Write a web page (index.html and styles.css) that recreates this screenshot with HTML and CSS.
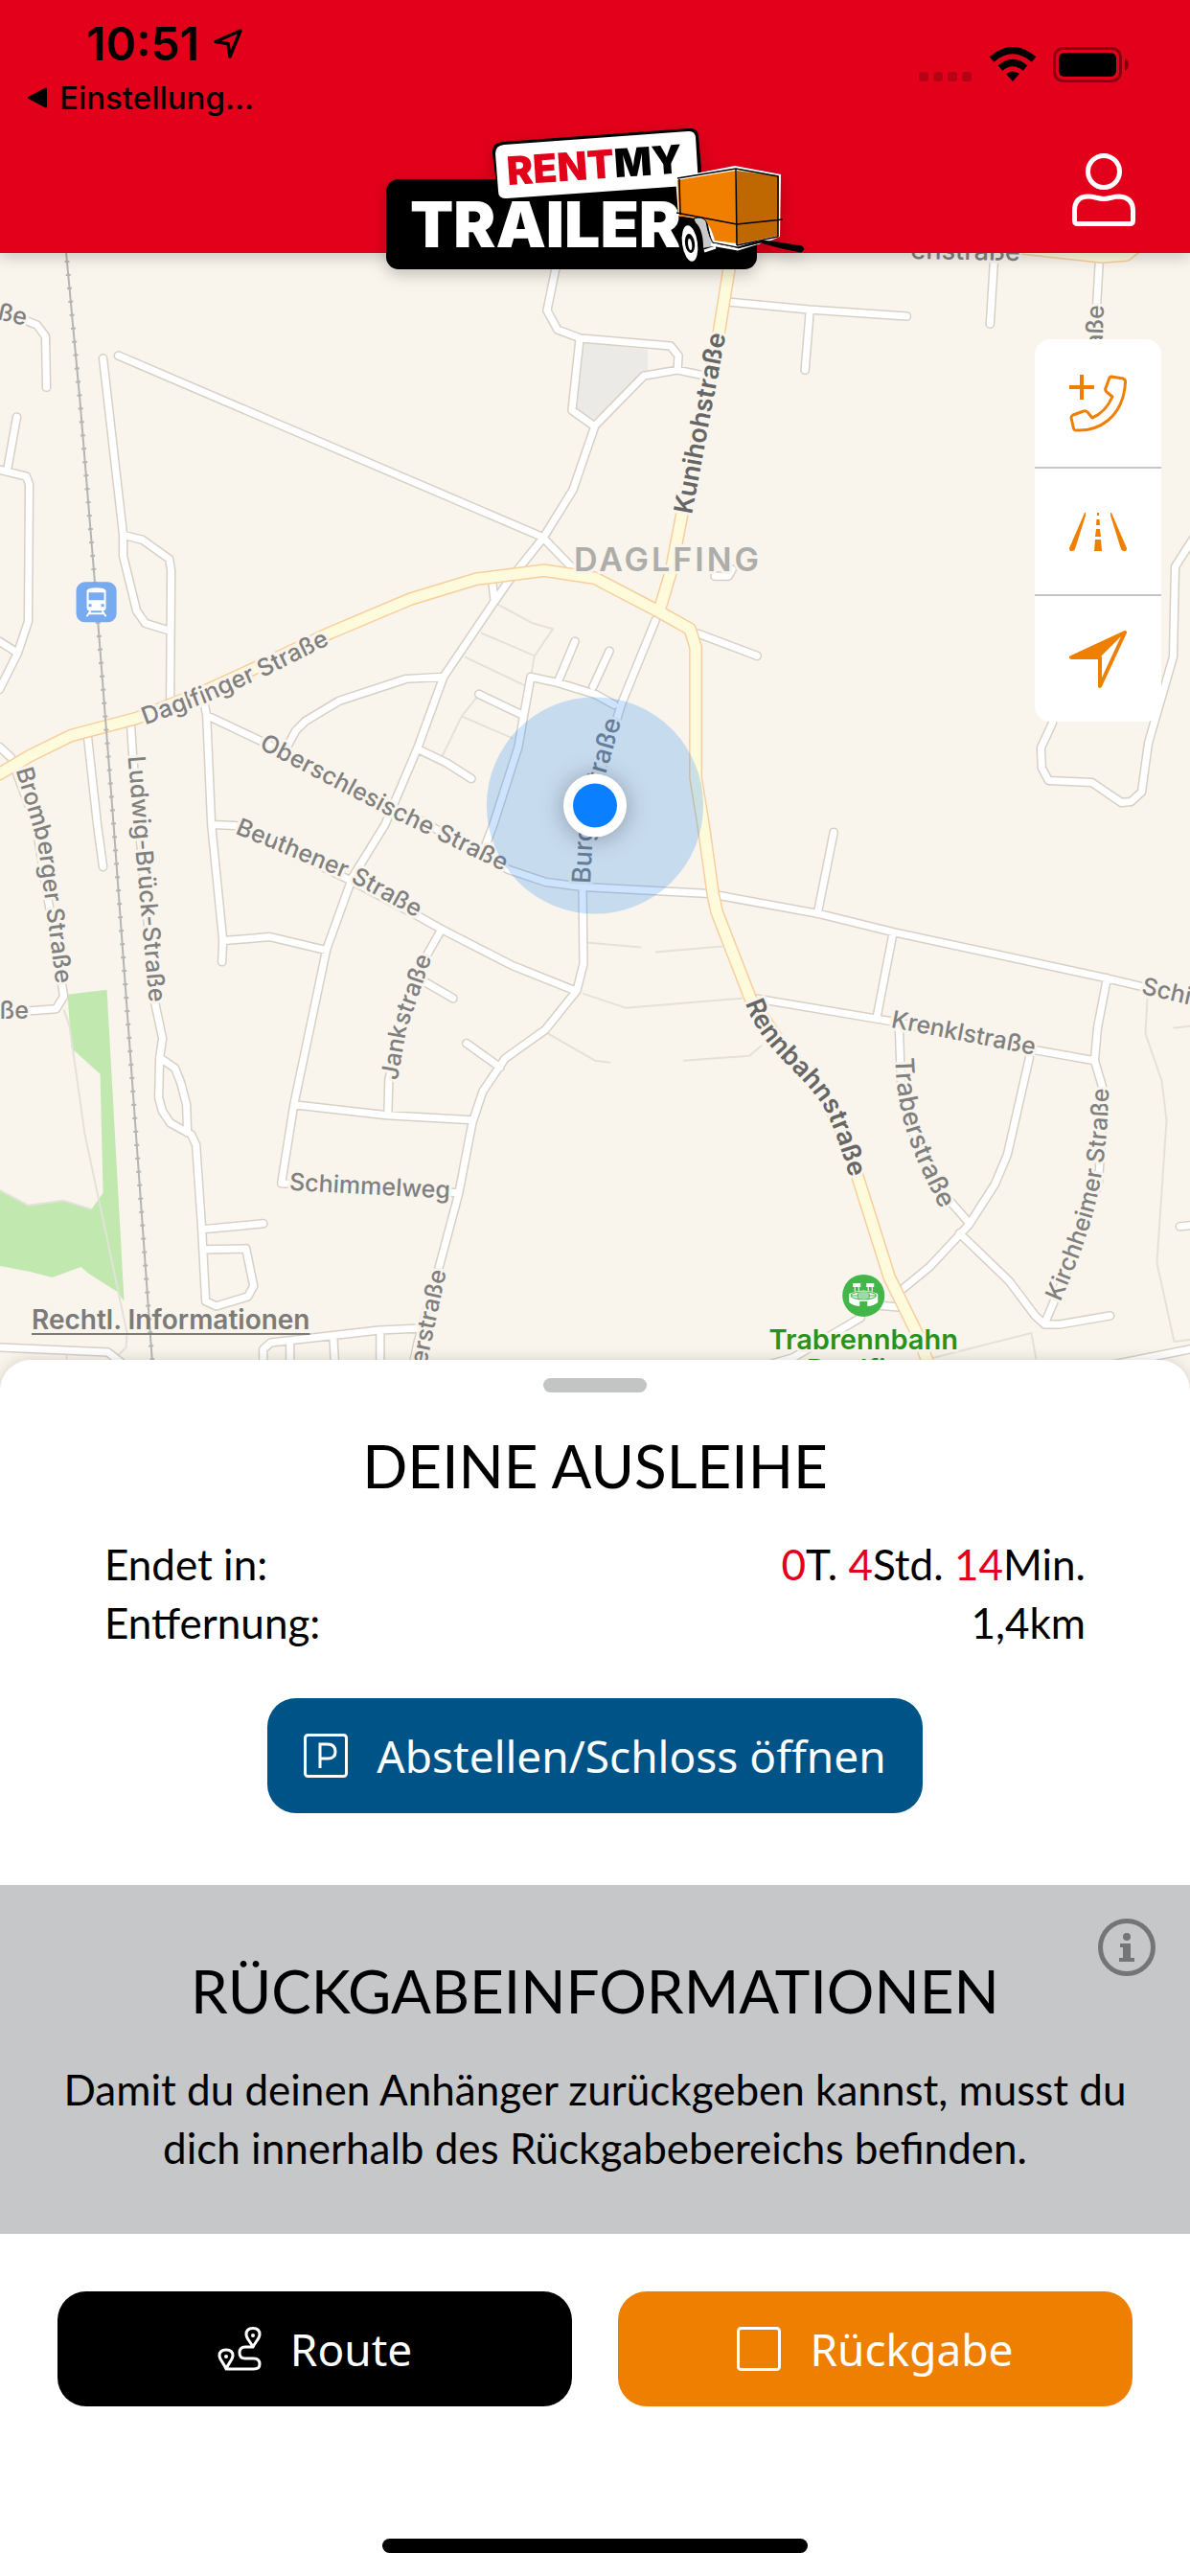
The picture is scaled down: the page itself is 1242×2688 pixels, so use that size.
FILE: index.html
```html
<!DOCTYPE html>
<html lang="de">
<head>
    <meta charset="UTF-8">
    <meta name="viewport" content="width=device-width, initial-scale=1.0">
    <title>Rent My Trailer</title>
    <link rel="stylesheet" href="styles.css">
</head>
<body>
    <header class="header">
        <div class="header-left">
            <div class="clock">
                <span>10:51</span>
                <svg width="32" height="34" viewBox="0 0 32 34"><path d="M29 3 L3 14.500 L16 16.500 L18 30 Z" fill="none" stroke="#000" stroke-width="3.500" stroke-linejoin="round"/></svg>
            </div>
            <a class="back" href="#">
                <svg width="22" height="24" viewBox="0 0 22 24"><path d="M2 12 L20 2.500 V21.500 Z" stroke="#000" stroke-width="2" stroke-linejoin="round"/></svg>
                Einstellung...
            </a>
        </div>

        <svg class="logo" width="436" height="150" viewBox="403 132 436 150" role="img" aria-label="Rent My Trailer">
            <rect x="403" y="187" width="387" height="94" rx="13"/>
            <path d="M525 148 L719 134 Q728 133 729 142 L733 188 L731 192 L530 207 Q520 208 519 199 L514 160 Q513 149 525 148 Z"/>
            <path d="M526 151 L718 137 Q725 136 726 143 L729 193 L529 207 Q520 208 520 199 L517 160 Q517 152 526 151 Z" fill="#fff"/>
            <g transform="rotate(-4 532 193)">
                <text class="logo-small" x="530" y="193"><tspan fill="#e3001b">RENT</tspan>MY</text>
            </g>
            <text class="logo-big" x="428" y="258">TRAILER</text>
            <!-- Anhänger -->
            <path d="M705 185 L767 173 L815 182 L814 247 L802 252 L786 256 L770 260 L750 254 L744 258 L738 230 L708 225 Z" fill="#fff"/>
            <path d="M707 188 L768 178 L769 254 L746 251 Q740 228 728 227 L709 226 Z" fill="#f07f00"/>
            <path d="M769 178 L813 184 L812 246 L769 255 Z" fill="#bf6700"/>
            <path d="M707 186 L768 176 L812 184 V247 L769 256 M768 176 L769 256 M709 187 L710 224 M706 222 L769 234 L817 229" fill="none" stroke="#000" stroke-width="1.500"/>
            <path d="M724 228 Q733 225 737 231 Q740 250 747 257 L730 260 L728 240 Z" fill="#c9c9c9" stroke="#000"/>
            <path d="M707 248 Q710 229 723 230 Q734 236 734 259 L736 269 Q727 275 720 275 Q710 270 707 248 Z"/>
            <ellipse cx="720" cy="254" rx="8" ry="19" fill="#fff" transform="rotate(-8 720 254)"/>
            <ellipse cx="720" cy="254" rx="5" ry="10" transform="rotate(-8 720 254)"/>
            <ellipse cx="720" cy="255" rx="2" ry="6" fill="#fff" transform="rotate(-8 720 254)"/>
            <path d="M742 255 L770 260 L795 252 M735 262 L747 258" fill="none" stroke="#fff" stroke-width="3"/>
            <path d="M744 253 L770 258 L795 251 L812 253 L837 257 Q841 260 836 263 L816 259 L794 253 L770 259" stroke="#000"/>
        </svg>

        <div class="header-right">
            <div class="status-icons">
                <svg width="56" height="12" viewBox="0 0 56 12" fill="#b50016"><rect x="0" width="10" height="10" y="1" rx="3"/><rect x="15" width="10" height="10" y="1" rx="3"/><rect x="30" width="10" height="10" y="1" rx="3"/><rect x="45" width="10" height="10" y="1" rx="3"/></svg>
                <svg width="50" height="37" viewBox="0 0 50 37"><g fill="none" stroke="#000" stroke-width="7"><path d="M3 13 Q25 -6 47 13"/><path d="M12 22 Q25 11 38 22"/></g><path d="M18 28 Q25 23 32 28 L25 36 Z"/></svg>
                <svg width="80" height="37" viewBox="0 0 80 37"><rect x="1.500" y="1.500" width="69" height="34" rx="9" fill="none" stroke="#88000f" stroke-width="3"/><rect x="6" y="6" width="60" height="25" rx="6"/><path d="M75 12 Q79 14 79 18.500 Q79 23 75 25 Z" fill="#88000f"/></svg>
            </div>
            <button class="profile" type="button" aria-label="Profil">
                <svg width="66" height="77" viewBox="0 0 66 77" fill="none" stroke="#fff" stroke-width="5"><circle cx="33" cy="19" r="16.500"/><path d="M2.500 60 Q2.500 45 17 45 C24 45 26 47.500 33 47.500 C40 47.500 42 45 49 45 Q63.500 46 63.500 60 V70 Q63.500 73.500 60 73.500 H6 Q2.500 73.500 2.500 70 Z"/></svg>
            </button>
        </div>
    </header>

    <main class="map">
        <svg class="map-canvas" viewBox="0 264 1242 1186" preserveAspectRatio="xMidYMin slice">
            <defs>
                <!-- Nebenstraßen -->
                <path id="roads" d="
                    M24 333 L39 339 L48 351 L49 404
                    M18 435 L8 491 M0 490 L28 497 L31 505 L30 648 L19 681 L0 719 M0 669 L19 681
                    M124 371 L566 560 L598 593
                    M108 374 L129 558 V580 L143 637 L152 650 L178 658
                    M129 558 L149 563 L177 583 L179 595 L178 731
                    M582 270 L571 324 L582 344 L606 353 L700 361 L708 371 L707 386
                    M605 354 L597 428 L618 443
                    M736 392 L707 386 L672 392 L621 444 L598 511 L567 561 L531 606 L515 629 L463 706 L436 780 L402 860 L368 915 L341 990 L307 1152 L294 1234 L479 1244
                    M514 608 L516 625
                    M463 706 L424 708 L354 731 L319 752 L309 762 L301 777
                    M213 731 L216 746 L273 773 L447 860 L531 907 L570 920 L608 925 L740 932 L855 953 L932 972 L1154 1020 L1242 1041
                    M216 746 L221 860 L233 980 L232 1003 M234 981 L282 977 L341 991
                    M222 860 L246 861 L368 919 L436 955 L461 969 L535 1007 L600 1033
                    M461 969 L444 999 L420 1064 L406 1126 L405 1163 M440 1022 L473 1041
                    M307 1152 L404 1163 L493 1168
                    M684 647 L649 733 L625 810 L612 850 L608 925 L609 1005 L602 1033 L569 1074 L527 1104 L504 1138 L493 1171 L479 1244 L459 1319 L436 1401 L430 1430
                    M487 1088 L522 1113
                    M600 669 L582 712 M636 679 L619 716 M641 735 L621 724 L582 712 L554 706 L546 750 L541 779 L515 860 L503 892
                    M500 724 L546 746 M438 782 L467 796 L492 812
                    M729 661 L790 684
                    M760 315 L844 323 L946 330 M845 325 L840 386
                    M1038 258 L1033 338 M1147 270 L1144 321 L1140 380
                    M746 601 H760 L764 594
                    M1098 754 L1086 780 L1087 801 L1094 814 L1139 816 L1170 837 L1180 836 L1191 826 L1198 775 L1224 685 L1226 591 L1246 560
                    M870 868 L853 953 M932 972 L915 1060
                    M787 1041 L930 1065 L1080 1095 L1142 1106
                    M1155 1020 L1145 1072 L1142 1106 L1150 1133 V1175 L1146 1233 L1120 1309 L1090 1380
                    M938 1068 L940 1126 L950 1175 L969 1221 L989 1250 L1011 1275
                    M1074 1103 L1051 1204 L1038 1235 L1011 1277 L970 1321 L942 1344
                    M1001 1286 L1053 1336 L1080 1372 L1090 1381 H1106 L1158 1372
                    M1231 1279 L1250 1277 M1156 1424 L1246 1406
                    M914 1361 L938 1363 M898 1374 L827 1416 L799 1424
                    M0 779 L12 790 L38 860 L65 1026 L67 1039 L59 1052 L32 1054
                    M92 769 L102 860 L108 904
                    M137 757 L139 788 L162 1045 L170 1083 L167 1103 L166 1145 L170 1159 L178 1171 L200 1183 L205 1194 L211 1282 L215 1357 L226 1362 L259 1352 L265 1341 L257 1302 L212 1303
                    M211 1282 L275 1276 M167 1103 L183 1114 L189 1129 L195 1152 L196 1181
                    M0 1405 L113 1410 L131 1424
                    M275 1426 V1407 L283 1400 L396 1387 L440 1385 M303 1400 V1426 M348 1393 L350 1426 M397 1387 V1426"/>
                <!-- Hauptstraßen -->
                <path id="main-roads" d="
                    M0 807 L32 788 L75 767 L143 749 L218 719 L277 692 L345 660 L428 625 L497 604 L568 595 L621 603 L686 637 L720 656 L726 675 V811 L734 860 L744 932 L748 951 L783 1041 L819 1095 L859 1141 L882 1187 L898 1237 L928 1332 L958 1393 L975 1440
                    M765 255 L750 348 L712 535 L700 597 L688 637
                    M1040 256 L1150 268 L1175 266 L1190 254"/>
                <path id="l-daglfinger" d="M152 756 L215 733 L280 704 L360 664"/>
                <path id="l-ober" d="M270 780 L408 852 L545 918"/>
                <path id="l-beuthener" d="M245 869 L362 917 L455 968"/>
                <path id="l-jank" d="M415 1127 L424 1075 L452 995"/>
                <path id="l-bromberger" d="M17 803 L40 880 L62 1050"/>
                <path id="l-ludwig" d="M134 789 L142 888 L158 1065"/>
                <path id="l-kunihoh" d="M722 537 L738 451 L761 330"/>
                <path id="l-burg" d="M616 922 L620 850 L655 728"/>
                <path id="l-renn" d="M778 1046 C795 1100 850 1125 866 1168 C876 1190 882 1215 894 1250"/>
                <path id="l-traber" d="M934 1103 C936 1165 950 1200 982 1262"/>
                <path id="l-kirch" d="M1106 1358 C1140 1280 1156 1230 1157 1120"/>
            </defs>

            <rect y="264" width="1242" height="1186" fill="#f9f4ec"/>
            <path fill="#ebeae6" d="M606 357 L676 365 V390 L621 440 L596 426 Z"/>
            <path fill="#c1e9af" d="M71 1037 L112 1032 L130 1357 L123 1347 L93 1328 L85 1321 L55 1332 L32 1326 L0 1320 V1241 L30 1257 L67 1252 L96 1261 L108 1244 L105 1120 L75 1093 Z"/>
            <path class="trail" d="M519 630 L556 650 L577 656 L558 684 L554 706 M502 660 L558 684 M485 685 L548 715 M497 728 L482 747 L461 790 M482 747 L535 770 M612 983 L669 988 M684 993 L754 987 M608 1036 L653 1051 L775 1041 M713 1106 L782 1101 L795 1090 M572 1078 L621 1106 L637 1108 M1197 1041 L1195 1078 L1212 1127 L1217 1168 L1207 1317 L1225 1399 L1242 1397 M1224 1072 L1242 1070 M973 1416 L1076 1390 L1082 1422 M67 1053 L73 1070 L89 1183 L107 1267 L133 1390 L132 1405 L124 1413 M70 1407 V1422 M0 1241 L30 1257 L67 1252 L96 1261"/>
            <use href="#roads" class="road-edge"/>
            <use href="#roads" class="road"/>
            <use href="#main-roads" class="main-edge"/>
            <use href="#main-roads" class="main-road"/>
            <path class="rail" d="M69 258 L84 419 L101 627 L119 860 L135 1080 L160 1430"/>
            <path class="rail-ties" d="M69 258 L84 419 L101 627 L119 860 L135 1080 L160 1430"/>

            <g class="street">
                <text><textPath href="#l-daglfinger">Daglfinger Straße</textPath></text>
                <text><textPath href="#l-ober">Oberschlesische Straße</textPath></text>
                <text><textPath href="#l-beuthener">Beuthener Straße</textPath></text>
                <text><textPath href="#l-jank">Jankstraße</textPath></text>
                <text><textPath href="#l-bromberger">Bromberger Straße</textPath></text>
                <text><textPath href="#l-ludwig">Ludwig-Brück-Straße</textPath></text>
                <text class="street-large"><textPath href="#l-burg">Burgaustraße</textPath></text>
                <text class="street-large"><textPath href="#l-traber">Traberstraße</textPath></text>
                <text><textPath href="#l-kirch">Kirchheimer Straße</textPath></text>
                <text transform="translate(302 1241) rotate(3)">Schimmelweg</text>
                <text transform="translate(445 1424) rotate(-78)">erstraße</text>
                <text transform="translate(929 1071) rotate(11)">Krenklstraße</text>
                <text transform="translate(1190 1036) rotate(13)">Schi</text>
                <text transform="translate(-3 333) rotate(13)">ße</text>
                <text x="0" y="1062">ße</text>
                <text transform="translate(1150 363) rotate(-88)">aße</text>
                <text class="street-large" transform="translate(950 270) rotate(1)">enstraße</text>
            </g>
            <g class="street street-main">
                <text><textPath href="#l-kunihoh">Kunihohstraße</textPath></text>
                <text><textPath href="#l-renn">Rennbahnstraße</textPath></text>
            </g>
            <text class="district" x="599" y="596">DAGLFING</text>

            <!-- Bahnhof -->
            <g transform="translate(80 607)">
                <rect width="42" height="42" rx="9" fill="#78aaf0"/>
                <path fill="#fff" fill-rule="evenodd" d="M11 9 Q12 6 21 6 Q30 6 31 9 V27 Q31 30 28 30 H14 Q11 30 11 27 Z M13 11 V19 H29 V11 Z M13 23 V26 H16 V23 Z M26 23 V26 H29 V23 Z"/>
                <path d="M15 30 L11 36 M27 30 L31 36 M13 33 H29" stroke="#fff" stroke-width="2"/>
            </g>
            <!-- Trabrennbahn -->
            <g transform="translate(901 1351)">
                <circle r="22" fill="#42b649"/>
                <path d="M-11 -13 H-3 V-9 H-11 Z M3 -13 H11 V-9 H3 Z M-15 -2 Q0 -9 15 -2 V7 Q10 11 4 11 V6 H-4 V11 Q-10 11 -15 7 Z" fill="#fff"/>
                <path d="M-9 -9 V-4 M-5 -9 V-5 M5 -9 V-5 M9 -9 V-4" stroke="#fff"/>
                <ellipse cy="0" rx="13" ry="4" fill="none" stroke="#42b649"/>
                <path d="M-6 -2 H6 V2 H-6 Z M-13 0 H13" fill="none" stroke="#42b649"/>
            </g>
            <text class="poi" x="901" y="1407">Trabrennbahn</text>
            <text class="poi" x="901" y="1438">Daglfing</text>

            <circle cx="621" cy="840" r="113" fill="#007aff" fill-opacity=".2"/>
            <circle class="dot" cx="621" cy="840" r="33"/>
            <circle cx="621" cy="840" r="23" fill="#0a7fff"/>
        </svg>

        <div class="tools">
            <button type="button" aria-label="Anrufen">
                <svg width="60" height="60" viewBox="0 0 60 60" fill="none" stroke="#ef7f00" stroke-linejoin="round"><path d="M0 13 H26 M13 0 V26" stroke-width="4"/><path d="M44 2 L56 4 Q59 5 58.500 8 Q57 34 40 48 Q26 59 7 58 Q5 58 4.500 56 L2 45 Q2 43 4 42 L15 38 Q17 37 19 39 L24 45 Q38 39 45 23 L39 18 Q37 16 38 14 L42 3 Q43 2 44 2 Z" stroke-width="3"/></svg>
            </button>
            <button type="button" aria-label="Strecke">
                <svg width="60" height="60" viewBox="0 0 60 60" fill="#ef7f00"><path d="M16 10 H17 V13 L6 48 Q5 50 3 50 H1 Q0 49 0 47 Z M43 10 H44 L60 47 Q60 49 59 50 H57 Q55 50 54 48 L43 13 Z M29 10 H31 V13 H29 Z M28.500 17 H31.500 L32 23 H28 Z M28 27 H32 L33 35 H27 Z M27 38 H33 L34 50 H26 Z"/></svg>
            </button>
            <button type="button" aria-label="Mein Standort">
                <svg width="60" height="60" viewBox="0 0 60 60"><path d="M58 2 L2 28 H32 V58 Z" fill="none" stroke="#ef7f00" stroke-width="4" stroke-linejoin="round"/><path d="M58 2 L2 28 H32 Z" fill="#ef7f00"/></svg>
            </button>
        </div>

        <a class="legal" href="#">Rechtl. Informationen</a>
    </main>

    <section class="sheet">
        <div class="handle"></div>
        <h1>DEINE AUSLEIHE</h1>
        <dl class="rental">
            <div>
                <dt>Endet in:</dt>
                <dd><b>0</b>T. <b>4</b>Std. <b>14</b>Min.</dd>
            </div>
            <div>
                <dt>Entfernung:</dt>
                <dd>1,4km</dd>
            </div>
        </dl>
        <button class="btn btn-blue" type="button">
            <svg width="46" height="46" viewBox="0 0 46 46" fill="none" stroke="#fff" stroke-width="3"><rect x="1.500" y="1.500" width="43" height="43" rx="3"/><path d="M17 36 V11 H25 Q33 11 33 19 Q33 26 25 26 H17"/></svg>
            Abstellen/Schloss öffnen
        </button>

        <div class="return-info">
            <button class="info" type="button" aria-label="Info">
                <svg width="60" height="60" viewBox="0 0 60 60"><circle cx="30" cy="30" r="27.500" fill="none" stroke="#747577" stroke-width="5"/><circle cx="30" cy="19" r="4" fill="#747577"/><path d="M23 26 H34 V41 H38 V45 H22 V41 H26 V30 H23 Z" fill="#747577"/></svg>
            </button>
            <h2>RÜCKGABEINFORMATIONEN</h2>
            <p>Damit du deinen Anhänger zurückgeben kannst, musst du dich innerhalb des Rückgabebereichs befinden.</p>
        </div>

        <div class="actions">
            <button class="btn btn-black" type="button">
                <svg width="46" height="46" viewBox="0 0 46 46" fill="none" stroke="#fff" stroke-width="3" stroke-linejoin="round"><path d="M9 44 C6 37 2 34 2 30 Q2 24 9 24 Q16 24 16 30 C16 34 12 37 9 44 Z M37 21 C34 15 30 12 30 8 Q30 1.500 37 1.500 Q44 1.500 44 8 C44 12 40 15 37 21 Z M37 21 H29 Q23 21 23 27 Q23 33 29 33 H38 Q44 33 44 39 Q44 44 38 44 H9"/><g fill="#fff" stroke="none"><circle cx="9" cy="31" r="2"/><circle cx="37" cy="9" r="2"/></g></svg>
                Route
            </button>
            <button class="btn btn-orange" type="button">
                <svg width="46" height="46" viewBox="0 0 46 46"><rect x="1.500" y="1.500" width="43" height="43" rx="3" fill="none" stroke="#fff" stroke-width="3"/></svg>
                Rückgabe
            </button>
        </div>
        <div class="home-bar"></div>
    </section>
</body>
</html>
```
FILE: styles.css
```css
* {
    box-sizing: border-box;
}
body {
    margin: 0;
    min-height: 100vh;
    display: flex;
    flex-direction: column;
    background: #fff;
    color: #000;
    font-family: Lato, sans-serif;
    overflow-x: hidden;
}
button {
    border: none;
    padding: 0;
    background: none;
    font-family: inherit;
    cursor: pointer;
}
svg {
    display: block;
    flex: none;
}

/* Kopfzeile */
.header {
    height: 264px;
    display: grid;
    grid-template-columns: 1fr auto 1fr;
    background: #e3001b;
    box-shadow: 0 4px 16px rgba(0, 0, 0, 0.2);
    position: relative;
    z-index: 2;
}
.header-left {
    padding: 18px 0 0 28px;
    font-family: Inter, sans-serif;
}
.clock {
    display: flex;
    align-items: center;
    gap: 14px;
    padding-left: 62px;
    font-size: 48px;
    font-weight: 600;
    line-height: 56px;
}
.back {
    display: flex;
    align-items: center;
    gap: 12px;
    font-size: 33px;
    font-weight: 500;
    line-height: 56px;
    color: #000;
    text-decoration: none;
}
.logo {
    align-self: end;
    margin-bottom: -18px;
    overflow: visible;
    filter: drop-shadow(0 6px 8px rgba(0, 0, 0, 0.2));
}
.logo-small {
    font: 900 41px Inter, sans-serif;
}
.logo-big {
    font: 900 66px Inter, sans-serif;
    fill: #fff;
}
.header-right {
    display: flex;
    flex-direction: column;
    align-items: flex-end;
    justify-content: space-between;
    padding: 49px 57px 27px 0;
}
.status-icons {
    display: flex;
    align-items: flex-end;
    gap: 17px;
    margin-right: 6px;
}

/* Karte */
.map {
    flex: 1;
    min-height: 700px;
    position: relative;
    overflow: hidden;
    background: #f9f4ec;
}
.map-canvas {
    position: absolute;
    inset: 0;
    width: 100%;
    height: 100%;
    font-family: Inter, sans-serif;
}
.map-canvas path,
.map-canvas use {
    stroke-linejoin: round;
}
.trail {
    fill: none;
    stroke: #e3e2da;
    stroke-width: 2;
}
.road-edge,
.road,
.main-edge,
.main-road {
    fill: none;
    stroke-linecap: round;
}
.road-edge {
    stroke: #d8d0c6;
    stroke-width: 10;
}
.road {
    stroke: #fff;
    stroke-width: 7;
}
.main-edge {
    stroke: #f8cf9c;
    stroke-width: 14;
}
.main-road {
    stroke: #fdfbdc;
    stroke-width: 11;
}
.rail {
    fill: none;
    stroke: #b5b5b3;
    stroke-width: 2;
}
.rail-ties {
    fill: none;
    stroke: #b5b5b3;
    stroke-width: 5;
    stroke-dasharray: 2 12;
}
.street text,
.district,
.poi {
    stroke: #f9f4ec;
    stroke-width: 6px;
    stroke-linejoin: round;
    paint-order: stroke;
}
.street {
    font-size: 25px;
    font-weight: 500;
    fill: #808080;
}
.street-large {
    font-size: 27px;
}
.street-main {
    font-size: 27px;
    font-weight: 600;
    fill: #666;
}
.district {
    font-size: 34px;
    font-weight: 600;
    letter-spacing: 3px;
    fill: #adada9;
}
.poi {
    font-size: 29px;
    font-weight: 600;
    text-anchor: middle;
    fill: #26941c;
}
.dot {
    fill: #fff;
    filter: drop-shadow(0 2px 12px rgba(0, 0, 0, 0.3));
}
.tools {
    position: absolute;
    top: 90px;
    right: 30px;
    width: 132px;
    border-radius: 16px;
    background: #fff;
    overflow: hidden;
}
.tools button {
    display: flex;
    align-items: center;
    justify-content: center;
    width: 100%;
    height: 133px;
}
.tools button + button {
    border-top: 2px solid #c6c6c8;
}
.legal {
    position: absolute;
    left: 33px;
    bottom: 58px;
    font: 600 28px/32px Inter, sans-serif;
    color: #7c7b77;
    text-underline-offset: 4px;
}

/* Ausleihe */
.sheet {
    display: flex;
    flex-direction: column;
    align-items: center;
    margin-top: -32px;
    padding: 19px 0 24px;
    border-radius: 32px 32px 0 0;
    background: #fff;
    box-shadow: 0 0 16px rgba(0, 0, 0, 0.15);
    position: relative;
    z-index: 1;
}
.handle {
    width: 108px;
    height: 15px;
    border-radius: 8px;
    background: #c3c4c4;
}
h1,
h2 {
    margin: 0;
    font-size: 62px;
    font-weight: 400;
    line-height: 72px;
    text-align: center;
}
h1 {
    margin-top: 40px;
}
.rental {
    align-self: stretch;
    margin: 37px 109px 48px;
    font-size: 44px;
    line-height: 61px;
}
.rental div {
    display: flex;
    justify-content: space-between;
}
.rental dd {
    margin: 0;
}
.rental b {
    font-weight: 400;
    color: #e3001b;
}
.btn {
    display: flex;
    align-items: center;
    justify-content: center;
    gap: 30px;
    height: 120px;
    border-radius: 30px;
    font-family: "Noto Sans", sans-serif;
    font-size: 46px;
    color: #fff;
}
.btn-blue {
    width: 684px;
    background: #005387;
}
.btn-black {
    background: #000;
}
.btn-orange {
    background: #ef7f00;
}
.return-info {
    align-self: stretch;
    margin-top: 75px;
    padding: 74px 60px 59px;
    background: #c6c7c9;
    position: relative;
}
.return-info p {
    margin: 37px 0 0;
    font-size: 44px;
    line-height: 61px;
    text-align: center;
}
.info {
    position: absolute;
    top: 35px;
    right: 36px;
}
.actions {
    align-self: stretch;
    display: grid;
    grid-template-columns: 1fr 1fr;
    gap: 48px;
    margin: 60px 60px 138px;
}
.home-bar {
    width: 444px;
    height: 15px;
    border-radius: 8px;
    background: #000;
}
```
